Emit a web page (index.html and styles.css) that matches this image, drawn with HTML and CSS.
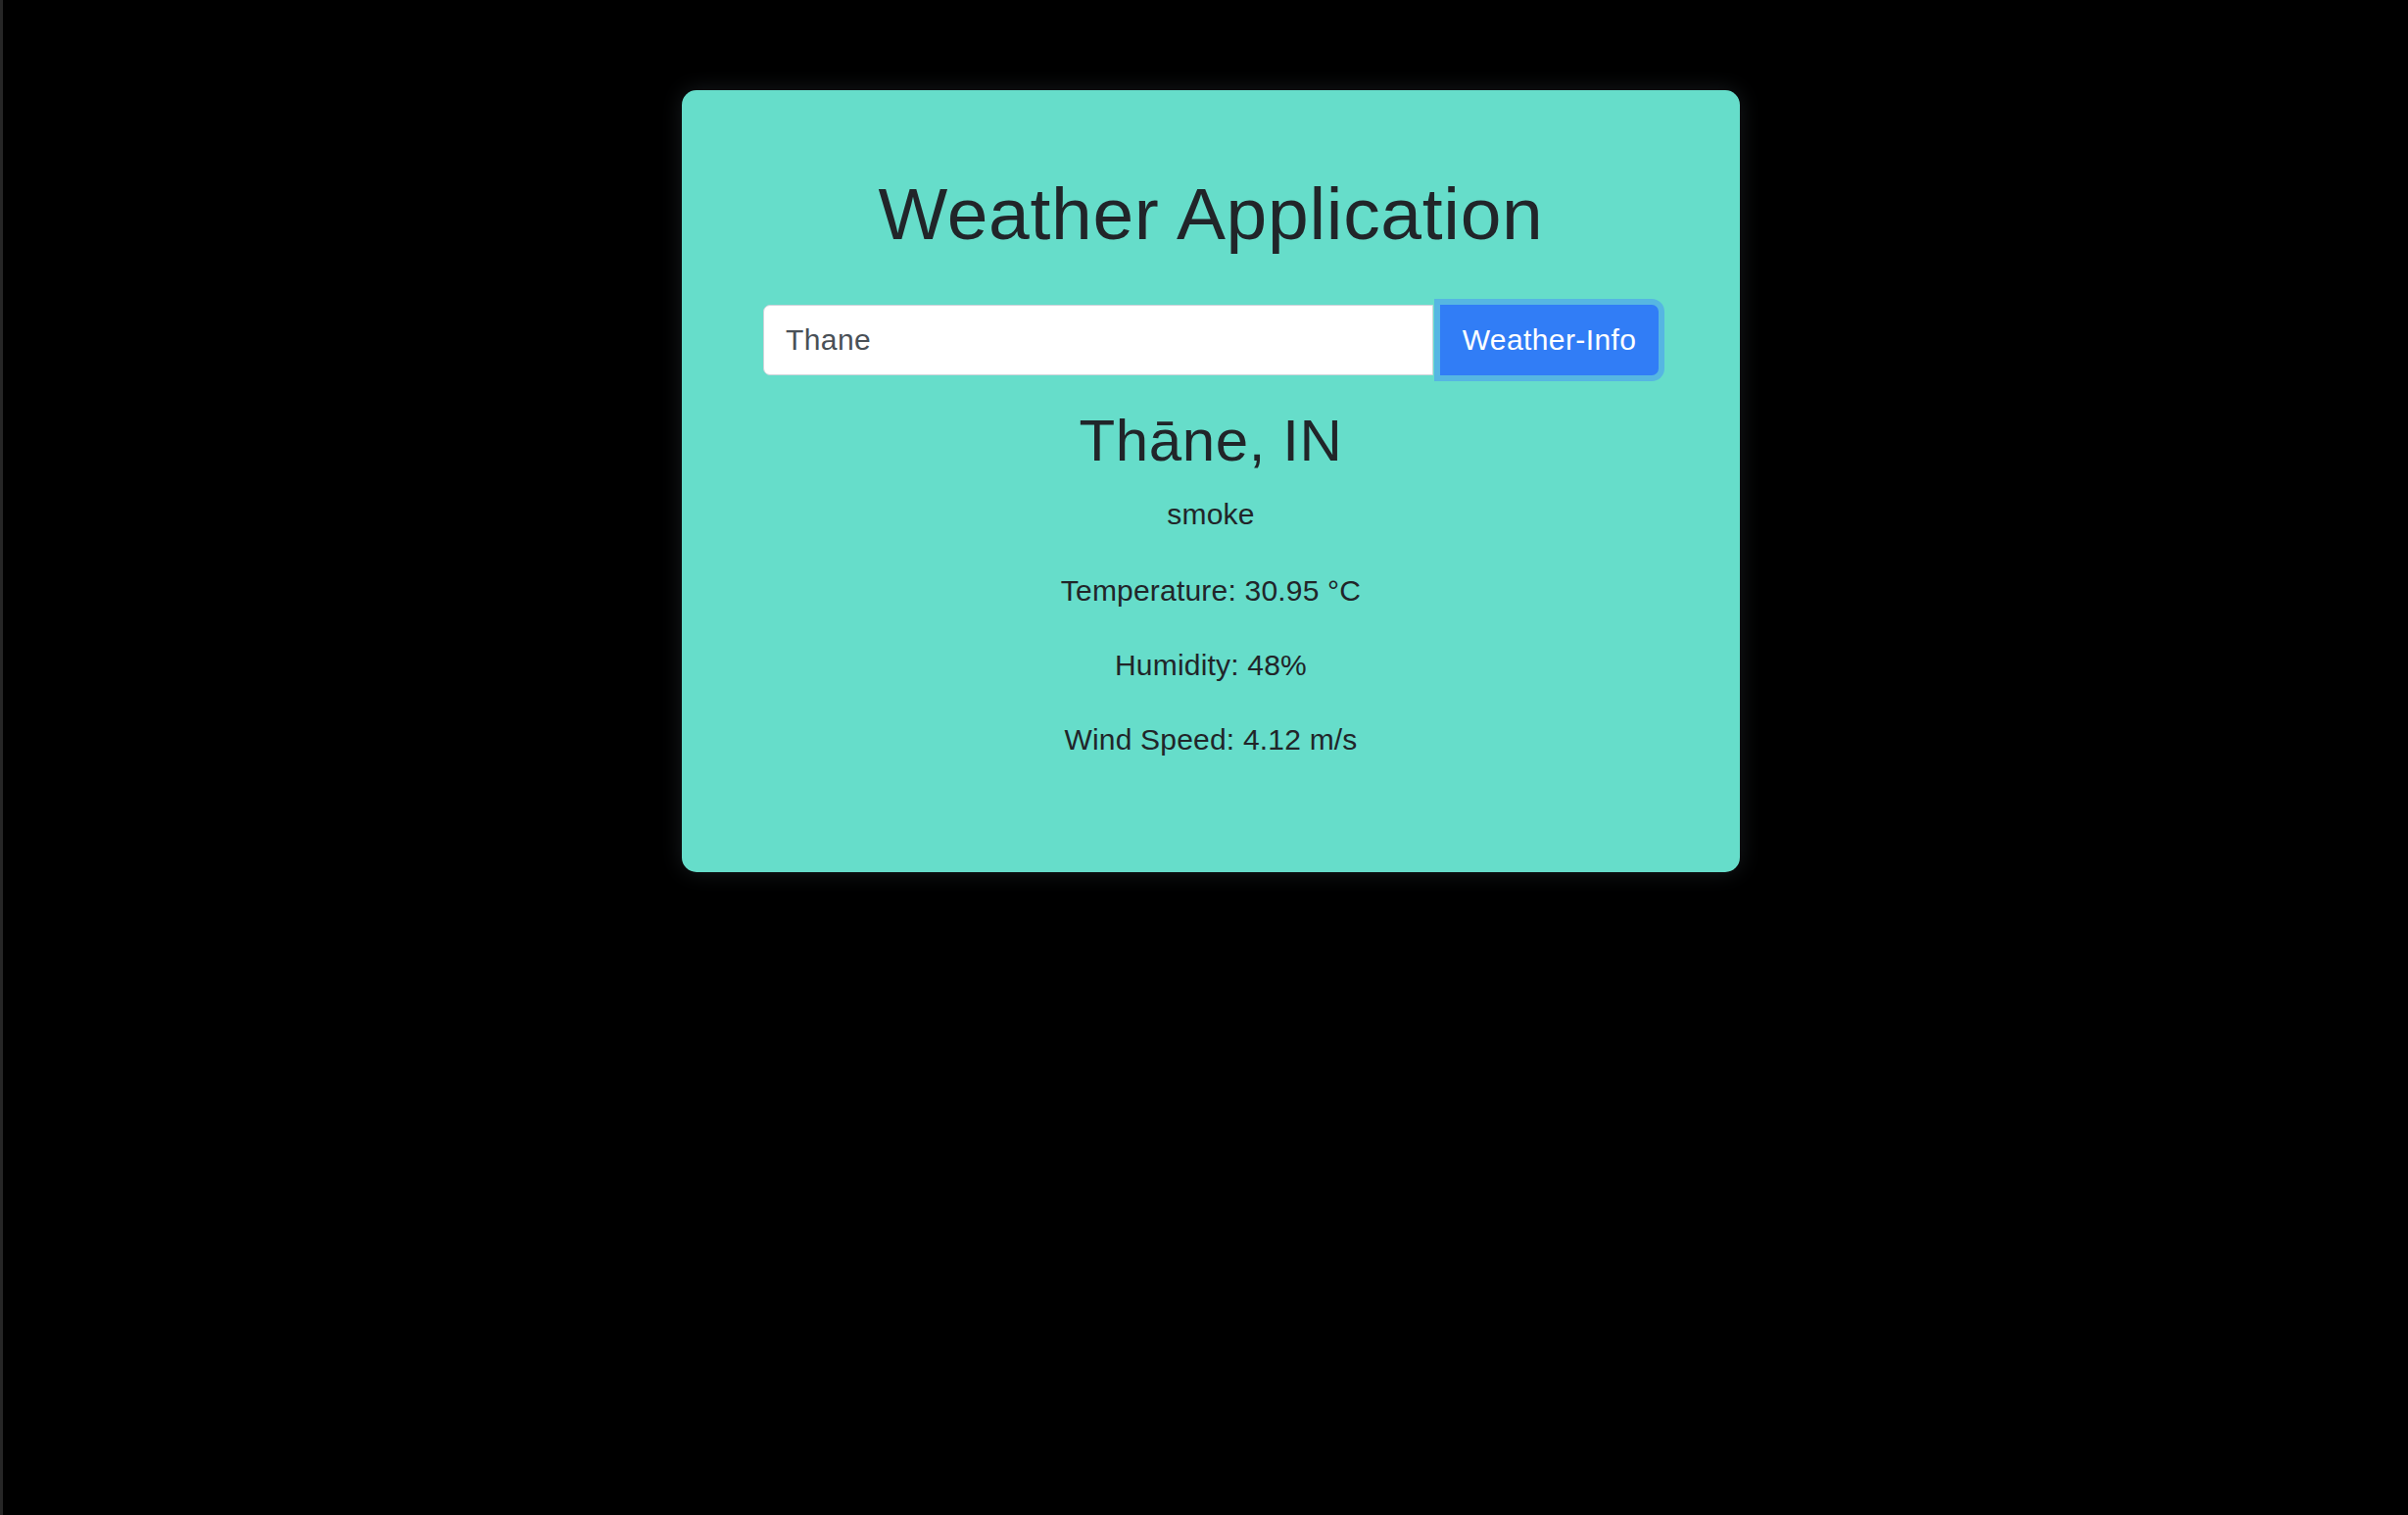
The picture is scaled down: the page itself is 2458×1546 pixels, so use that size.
FILE: index.html
```html
<!DOCTYPE html>
<html lang="en">
<head>
<meta charset="utf-8">
<title>Weather Application</title>
<link rel="stylesheet" href="styles.css">
</head>
<body>
<div class="page">
  <main class="card">
    <h1 class="title">Weather Application</h1>
    <form class="search" onsubmit="return false;">
      <input class="search-input" type="text" value="Thane">
      <button class="search-btn" type="button">Weather-Info</button>
    </form>
    <h2 class="city">Thāne, IN</h2>
    <p class="desc">smoke</p>
    <p class="stat">Temperature: 30.95 °C</p>
    <p class="stat">Humidity: 48%</p>
    <p class="stat">Wind Speed: 4.12 m/s</p>
  </main>
</div>
</body>
</html>
```

FILE: styles.css
```css
html, body {
  margin: 0;
  padding: 0;
  background: #000;
  min-height: 100%;
}

body {
  border-left: 3px solid #262626;
  min-height: 1546px;
  box-sizing: border-box;
  font-family: "Liberation Sans", Arial, sans-serif;
}

.page {
  display: flex;
  justify-content: center;
  padding-top: 92px;
  padding-left: 11px;
}

.card {
  width: 1080px;
  box-sizing: border-box;
  padding: 81px 83px 82px;
  background: #66ddca;
  border-radius: 15px;
  text-align: center;
  color: #212529;
  box-shadow: 0 0 22px rgba(70, 80, 90, 0.35);
}

.title {
  margin: 0 0 48px;
  font-size: 75px;
  line-height: 90px;
  font-weight: 400;
  letter-spacing: 0.7px;
}

.search {
  display: flex;
  gap: 7px;
  height: 72px;
  margin: 0;
}

.search-input {
  flex: 1;
  min-width: 0;
  height: 72px;
  box-sizing: border-box;
  padding: 0 22px;
  border: 1px solid #ced4da;
  border-radius: 7px 0 0 7px;
  background: #fff;
  color: #495057;
  font-family: "Liberation Sans", Arial, sans-serif;
  font-size: 30px;
  letter-spacing: 0.4px;
  outline: none;
}

.search-btn {
  width: 223px;
  height: 72px;
  border: 0;
  border-radius: 0 7px 7px 0;
  background: #317df6;
  color: #fff;
  font-family: "Liberation Sans", Arial, sans-serif;
  font-size: 30px;
  letter-spacing: 0.4px;
  padding: 0;
  box-shadow: 0 0 0 6px #56b6e2;
  cursor: pointer;
}

.city {
  margin: 31px 0 16px;
  font-size: 60px;
  line-height: 72px;
  font-weight: 400;
  letter-spacing: 0.6px;
}

.desc {
  margin: 0 0 33px;
  font-size: 30px;
  line-height: 45px;
  letter-spacing: 0.2px;
}

.stat {
  margin: 0 0 31px;
  font-size: 30px;
  line-height: 45px;
  letter-spacing: 0.2px;
}
```
